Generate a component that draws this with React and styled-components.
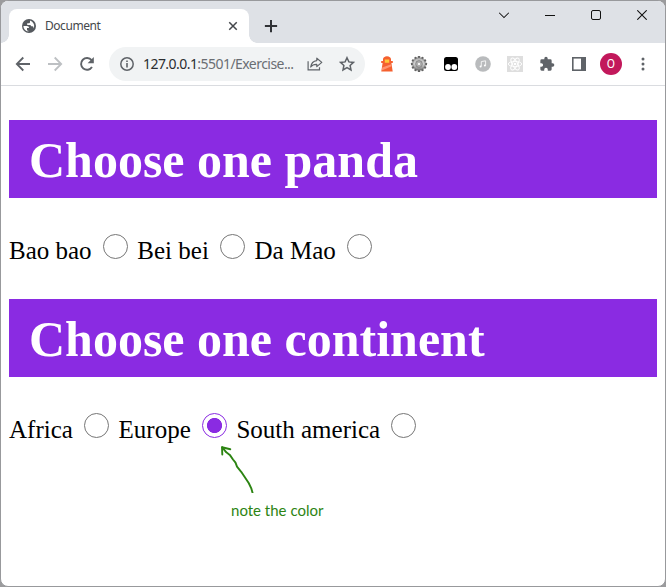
import React from 'react';
import styled, { createGlobalStyle, css } from 'styled-components';

const GlobalStyle = createGlobalStyle`
  * { box-sizing: border-box; }
  body { margin: 0; background: #9b9b9d; }
`;

const Window = styled.div`
  width: 666px;
  height: 587px;
  border: 1px solid #98999c;
  border-radius: 8px;
  background: #fff;
  overflow: hidden;
  display: flex;
  flex-direction: column;
`;

const TitleBar = styled.header`
  height: 42px;
  flex: none;
  background: #dee1e6;
  display: flex;
  align-items: flex-start;
  padding-left: 8px;
`;

const Tab = styled.div`
  position: relative;
  width: 240px;
  height: 34px;
  margin-top: 8px;
  padding: 0 10px 0 13px;
  border-radius: 8px 8px 0 0;
  background: #fff;
  display: flex;
  align-items: center;
  font: 13px 'Noto Sans', sans-serif;
  color: #45484c;

  &::before, &::after {
    content: '';
    position: absolute;
    bottom: 0;
    width: 8px;
    height: 8px;
  }
  &::before { left: -8px; background: radial-gradient(circle at 0 0, #dee1e6 7.5px, #fff 8px); }
  &::after { right: -8px; background: radial-gradient(circle at 100% 0, #dee1e6 7.5px, #fff 8px); }
`;

const TabTitle = styled.span`
  flex: 1;
  margin: -2px 0 0 9px;
  font-size: 12px;
  letter-spacing: -0.45px;
`;

const IconButton = styled.button`
  flex: none;
  width: ${(p) => p.$w}px;
  height: ${(p) => p.$h || 34}px;
  padding: 0;
  border: 0;
  background: none;
  color: ${(p) => p.$color || '#5f6368'};
  display: flex;
  align-items: center;
  justify-content: center;
`;

const NewTab = styled(IconButton)`
  margin: 8px 0 0 5px;
`;

const WindowControls = styled.div`
  display: flex;
  margin-left: auto;
`;

const Toolbar = styled.nav`
  height: 43px;
  flex: none;
  border-bottom: 1px solid #dadce0;
  display: flex;
  align-items: center;
  padding-left: 6px;
`;

const AddressBar = styled.div`
  width: 256px;
  height: 34px;
  margin-left: 6px;
  padding: 0 2px 0 11px;
  border-radius: 17px;
  background: #f1f3f4;
  display: flex;
  align-items: center;
`;

const Url = styled.span`
  flex: 1;
  margin: -1px 0 0 9px;
  white-space: nowrap;
  font: 14px 'Noto Sans', sans-serif;
  letter-spacing: -0.55px;
  color: #6a6e73;
`;

const Host = styled.span`
  color: #2b2d30;
`;

const Extensions = styled.div`
  display: flex;
  margin-left: 6px;
`;

const Avatar = styled.span`
  width: 22px;
  height: 22px;
  border-radius: 50%;
  background: #c2185b;
  color: #fff;
  font: 12px/22px Roboto, sans-serif;
  text-align: center;
`;

const Page = styled.main`
  flex: 1;
  padding: 34px 8px 0;
  font-family: 'Liberation Serif', serif;
  color: #000;
`;

const Banner = styled.h1`
  height: 78px;
  margin: 0;
  padding: 0 20px;
  background: #8a2be2;
  color: #fff;
  font-size: 50px;
  font-weight: bold;
  line-height: 81px;
`;

const Options = styled.div`
  height: 101px;
  padding-top: 36px;
  display: flex;
  align-items: flex-start;
  gap: 9.4px;
`;

const Option = styled.label`
  display: flex;
  gap: 11.3px;
  font-size: 25px;
  line-height: 34px;
  white-space: nowrap;
`;

const Radio = styled.input`
  appearance: none;
  width: 25px;
  height: 25px;
  margin: 0;
  border: 1px solid #767676;
  border-radius: 50%;
  background: #fff;

  ${(p) => p.defaultChecked && css`
    border-color: #8a2be2;
    background: radial-gradient(circle, #8a2be2 7.2px, #fff 7.9px);
  `}
`;

const Annotated = styled.span`
  position: relative;
  display: flex;
`;

const Note = styled.span`
  position: absolute;
  left: 13px;
  top: 28px;
  display: flex;
  flex-direction: column;
  color: #2c8412;
  font: 15px/20px Lato, sans-serif;
  white-space: nowrap;

  svg { margin-left: 3px; }
`;

const NoteText = styled.span`
  margin: 7px 0 0 16px;
`;

const Globe = () => (
  <svg width="14" height="14" viewBox="0 0 14 14">
    <circle cx="7" cy="7" r="7" fill="#55595e" />
    <path d="M1.4 7h3.5c1.7 0 2.2 1 2 2H5v1.7c0 .7.6 1 1.4 1v.9A5.6 5.6 0 0 1 1.4 7zM8 1.5v1.4c0 1-.7 1.4-1.5 1.4H5.2v1.6h2.4c1 0 1.5.6 1.5 1.3h1.3c.9 0 1.1.7 1.1 2.3A5.6 5.6 0 0 0 8 1.5z" fill="#fff" />
  </svg>
);

const Line = ({ size = 16, w = 1.8, d, ...rest }) => (
  <svg width={size} height={size} viewBox="0 0 16 16" fill="none" stroke="currentColor" strokeWidth={w} {...rest}>
    <path d={d} />
  </svg>
);

const Reload = () => (
  <svg width="16" height="16" viewBox="0 0 16 16">
    <path d="M13 11a5.9 5.9 0 1 1-.4-6.8" fill="none" stroke="currentColor" strokeWidth="1.9" />
    <path d="M14.8 1v6.2H8.6z" fill="currentColor" />
  </svg>
);

const Info = () => (
  <svg width="14" height="14" viewBox="0 0 14 14">
    <circle cx="7" cy="7" r="6.2" fill="none" stroke="#5f6368" strokeWidth="1.5" />
    <path d="M6.2 6.1h1.6v4.3H6.2zM6.2 3.4h1.6V5H6.2z" fill="#5f6368" />
  </svg>
);

const Share = () => (
  <svg width="16" height="16" viewBox="0 0 16 16" fill="none" stroke="currentColor" strokeWidth="1.2">
    <path d="M1.1 5.2v8.7h11.4v-2.6" />
    <path d="M9.8 2.2 14.8 6.4l-5 4.2V8.3C7.1 8.2 5.1 9 3.7 11c.5-3.5 2.5-6 6.1-6.4z" strokeLinejoin="round" />
  </svg>
);

const Lighthouse = () => (
  <svg width="14" height="18" viewBox="0 0 14 18">
    <path d="M3 6V4.4C3 2.6 4.700 1.300 7 1.300s4 1.300 4 3.100V6h1.800v2h-1.400l1.300 8.500H1.300L2.600 8H1.200V6z" fill="#f5602f" />
    <path d="M4.8 4.600h4.400v3.200H4.800z" fill="#ffc83a" />
    <path d="m2.200 12.500 9-3.200.4 2-9.800 4.300z" fill="#ff9470" />
  </svg>
);

const teeth = Array.from({ length: 12 }, (_, i) => i * 30);

const Gear = () => (
  <svg width="18" height="18" viewBox="0 0 18 18">
    <defs>
      <linearGradient id="metal" x1="0" y1="0" x2="0" y2="1">
        <stop offset="0" stopColor="#b0b0b0" />
        <stop offset=".5" stopColor="#d2d2d2" />
        <stop offset="1" stopColor="#777" />
      </linearGradient>
    </defs>
    {teeth.map((a) => (
      <rect key={a} x="7.8" y="1" width="2.4" height="4" rx=".5" fill="#626262" transform={`rotate(${a} 9 9)`} />
    ))}
    <circle cx="9" cy="9" r="6.3" fill="url(#metal)" stroke="#6c6c6c" strokeWidth=".6" />
    <circle cx="9" cy="9" r="3.3" fill="#bbb" stroke="#777" strokeWidth=".8" />
    <circle cx="9" cy="9" r="1.8" fill="#f3f3f3" stroke="#777" strokeWidth=".5" />
  </svg>
);

const Goggles = () => (
  <svg width="14" height="14" viewBox="0 0 14 14">
    <rect width="14" height="14" rx="2.5" fill="#000" />
    <circle cx="4" cy="10" r="2.9" fill="#fff" />
    <circle cx="10.3" cy="10" r="2.9" fill="#fff" />
  </svg>
);

const Music = () => (
  <svg width="16" height="16" viewBox="0 0 16 16">
    <circle cx="8" cy="8" r="7.8" fill="#b9bbbd" />
    <path d="M6.3 10.3V5.6l4.3-.8v4.700" fill="none" stroke="#fff" strokeWidth=".8" />
    <circle cx="5.6" cy="10.400" r="1" fill="#fff" />
    <circle cx="9.900" cy="9.600" r="1" fill="#fff" />
  </svg>
);

const Atom = () => (
  <svg width="16" height="16" viewBox="0 0 16 16" fill="none" stroke="#fff" strokeWidth=".9">
    <rect width="16" height="16" fill="#dedede" stroke="none" />
    <ellipse cx="8" cy="8" rx="6.7" ry="2.6" />
    <ellipse cx="8" cy="8" rx="6.7" ry="2.6" transform="rotate(60 8 8)" />
    <ellipse cx="8" cy="8" rx="6.7" ry="2.6" transform="rotate(120 8 8)" />
    <circle cx="8" cy="8" r="1.3" fill="#fff" stroke="none" />
  </svg>
);

const Puzzle = () => (
  <svg width="16" height="16" viewBox="0 0 24 24" fill="currentColor">
    <path d="M20.5 11H19V7a2 2 0 0 0-2-2h-4V3.5a2.500 2.500 0 0 0-5 0V5H4a2 2 0 0 0-2 2v3.8h1.5a2.700 2.700 0 0 1 0 5.400H2V20a2 2 0 0 0 2 2h3.8v-1.500a2.700 2.700 0 0 1 5.400 0V22H17a2 2 0 0 0 2-2v-4h1.500a2.500 2.500 0 0 0 0-5z" />
  </svg>
);

const SidePanel = () => (
  <svg width="14" height="14" viewBox="0 0 14 14">
    <rect x=".8" y=".8" width="12.4" height="12.4" fill="none" stroke="currentColor" strokeWidth="1.6" />
    <path d="M9 0h5v14H9z" fill="currentColor" />
  </svg>
);

const Dots = () => (
  <svg width="4" height="14" viewBox="0 0 4 14" fill="currentColor">
    <circle cx="2" cy="2" r="1.5" />
    <circle cx="2" cy="7" r="1.5" />
    <circle cx="2" cy="12" r="1.5" />
  </svg>
);

const Arrow = () => (
  <svg width="40" height="52" viewBox="0 0 40 52" fill="none" stroke="currentColor" strokeWidth="1.9" strokeLinecap="round" strokeLinejoin="round">
    <path d="M4.3 13.5 4 6.3 12.3 8.2" />
    <path d="m4.3 6.3 4 5 3.500 2.600 3.200 4.600 2.500 3.200 1.500 4 4.200 5.100 2.500 3.800 5 7.400 2.700 5.700 1.400 5" />
  </svg>
);

export default function App() {
  return (
    <>
      <GlobalStyle />
      <Window>
        <TitleBar>
          <Tab>
            <Globe />
            <TabTitle>Document</TabTitle>
            <IconButton $w={12} $color="#45484c">
              <Line size={10} w={2.4} d="M2 2l12 12M14 2L2 14" />
            </IconButton>
          </Tab>
          <NewTab $w={34} $color="#303236">
            <Line size={14} w={2.3} d="M8 1v14M1 8h14" />
          </NewTab>
          <WindowControls>
            <IconButton $w={46} $h={28} $color="#111"><Line size={12} w={1.35} d="M1.5 5 8 11.5 14.5 5" /></IconButton>
            <IconButton $w={46} $h={28} $color="#111"><Line size={10} w={1.6} d="M0 8.8h16" /></IconButton>
            <IconButton $w={46} $h={28} $color="#111">
              <svg width="10" height="10" viewBox="0 0 10 10"><rect x=".5" y=".5" width="9" height="9" rx="1.5" fill="none" stroke="currentColor" /></svg>
            </IconButton>
            <IconButton $w={46} $h={28} $color="#111"><Line size={10} w={1.7} d="M.5.5l15 15M15.5.5l-15 15" /></IconButton>
          </WindowControls>
        </TitleBar>

        <Toolbar>
          <IconButton $w={32}><Line d="M15 8H2M8.3 1.5 1.8 8l6.5 6.5" /></IconButton>
          <IconButton $w={32} $color="#bdc0c3"><Line d="M1 8h13M7.7 1.5 14.2 8l-6.5 6.5" /></IconButton>
          <IconButton $w={32}><Reload /></IconButton>
          <AddressBar>
            <Info />
            <Url><Host>127.0.0.1</Host>:5501/Exercise...</Url>
            <IconButton $w={32}><Share /></IconButton>
            <IconButton $w={32}>
              <Line w={1.5} d="m8 1.7 1.9 4.2 4.6.5-3.4 3.1.9 4.5L8 11.7 4 14l.9-4.500-3.400-3.100 4.600-.5z" />
            </IconButton>
          </AddressBar>
          <Extensions>
            <IconButton $w={32}><Lighthouse /></IconButton>
            <IconButton $w={32}><Gear /></IconButton>
            <IconButton $w={32}><Goggles /></IconButton>
            <IconButton $w={32}><Music /></IconButton>
            <IconButton $w={32}><Atom /></IconButton>
            <IconButton $w={32}><Puzzle /></IconButton>
            <IconButton $w={32}><SidePanel /></IconButton>
            <IconButton $w={32}><Avatar>O</Avatar></IconButton>
            <IconButton $w={32}><Dots /></IconButton>
          </Extensions>
        </Toolbar>

        <Page>
          <Banner>Choose one panda</Banner>
          <Options>
            <Option>Bao bao<Radio type="radio" name="panda" /></Option>
            <Option>Bei bei<Radio type="radio" name="panda" /></Option>
            <Option>Da Mao<Radio type="radio" name="panda" /></Option>
          </Options>
          <Banner>Choose one continent</Banner>
          <Options>
            <Option>Africa<Radio type="radio" name="continent" /></Option>
            <Option>
              Europe
              <Annotated>
                <Radio type="radio" name="continent" defaultChecked />
                <Note>
                  <Arrow />
                  <NoteText>note the color</NoteText>
                </Note>
              </Annotated>
            </Option>
            <Option>South america<Radio type="radio" name="continent" /></Option>
          </Options>
        </Page>
      </Window>
    </>
  );
}
